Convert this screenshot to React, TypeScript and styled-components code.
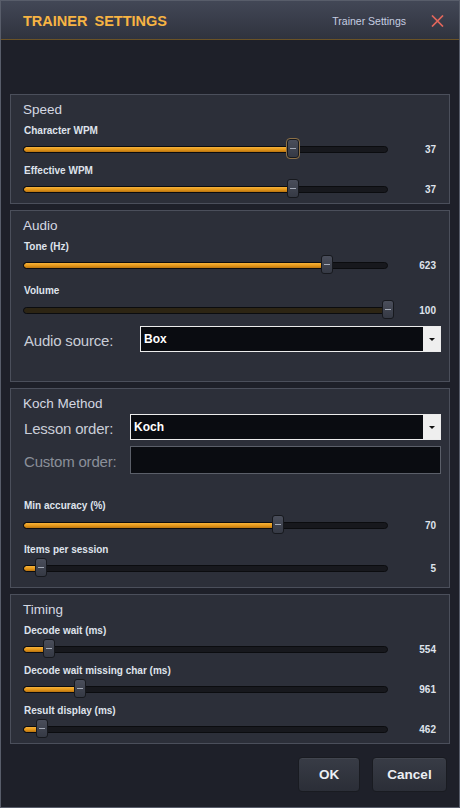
import React from "react";
import styled, { createGlobalStyle } from "styled-components";

const GlobalStyle = createGlobalStyle`
  html, body {
    margin: 0;
    padding: 0;
    background: #1e2029;
  }
  body {
    font-family: "Liberation Sans", Arial, sans-serif;
  }
  * {
    box-sizing: border-box;
  }
`;

const TRACK_W = 365;

const Window = styled.div`
  width: 460px;
  height: 808px;
  display: flex;
  flex-direction: column;
  background: #1e2029;
  border: 1px solid #585d6a;
  overflow: hidden;
`;

const TitleBar = styled.div`
  height: 39px;
  flex: none;
  display: flex;
  align-items: center;
  padding: 0 15px 0 22px;
  background: linear-gradient(#424756, #2f333e);
  border-bottom: 1px solid #6b5326;
`;

const Title = styled.div`
  flex: 1;
  color: #f7b443;
  font-size: 14.5px;
  font-weight: 700;
  word-spacing: 3px;
  padding-top: 1px;
`;

const Caption = styled.div`
  color: #c6cee2;
  font-size: 10.5px;
  margin-right: 25px;
  padding-top: 2px;
`;

const CloseIcon = styled.svg`
  width: 13px;
  height: 12px;
  margin-top: 1px;
`;

const Content = styled.div`
  flex: 1;
  display: flex;
  flex-direction: column;
  gap: 6px;
  padding: 54px 9px 0 9px;
`;

const Group = styled.section<{ $pb: number }>`
  display: flex;
  flex-direction: column;
  background: #2c2f39;
  border: 1px solid #4b4f5b;
  padding: 7px 8px ${(p) => p.$pb}px 12px;
`;

const GroupTitle = styled.div`
  color: #d4d8e2;
  font-size: 13.5px;
  line-height: 16px;
  height: 16px;
`;

const Field = styled.div<{ $mt?: number }>`
  display: flex;
  flex-direction: column;
  margin-top: ${(p) => p.$mt ?? 6}px;
`;

const FieldLabel = styled.div<{ $gap?: number }>`
  color: #dfe3ec;
  font-size: 10px;
  font-weight: 700;
  line-height: 14px;
  padding-left: 1px;
  margin-bottom: ${(p) => p.$gap ?? 1}px;
`;

const SliderRow = styled.div`
  display: grid;
  grid-template-columns: ${TRACK_W}px 1fr;
  align-items: center;
  height: 20px;
`;

const TrackArea = styled.div`
  position: relative;
  height: 20px;
  display: flex;
  align-items: center;
`;

const Track = styled.div`
  width: 100%;
  height: 7px;
  border-radius: 4px;
  background: #17181d;
  border: 1px solid #0b0c0f;
  overflow: hidden;
`;

const Fill = styled.div<{ $muted?: boolean }>`
  height: 100%;
  border-radius: 3px 0 0 3px;
  background: ${(p) =>
    p.$muted
      ? "#2d2514"
      : "linear-gradient(#f7b23a, #e29619 55%, #b87210)"};
`;

const Thumb = styled.div<{ $focus?: boolean }>`
  position: absolute;
  top: 0;
  width: 12px;
  height: 19px;
  border-radius: 3px;
  background: linear-gradient(#4a4e5b, #353944);
  border: 1px solid #17191e;
  outline: ${(p) => (p.$focus ? "1px solid #8c7046" : "none")};
  display: flex;
  align-items: center;
  justify-content: center;

  &::after {
    content: "";
    width: 6px;
    height: 1px;
    background: #a3a9b6;
  }
`;

const Value = styled.div`
  color: #dfe3ec;
  font-size: 10px;
  font-weight: 700;
  text-align: right;
  padding-right: 5px;
`;

const FormRow = styled.div<{ $label: number; $mt: number }>`
  display: grid;
  grid-template-columns: ${(p) => p.$label}px 1fr;
  align-items: center;
  margin-top: ${(p) => p.$mt}px;
`;

const FormLabel = styled.div<{ $disabled?: boolean }>`
  color: ${(p) => (p.$disabled ? "#8b8f99" : "#c9cdd7")};
  font-size: 15px;
  letter-spacing: -0.2px;
  padding: 3px 0 0 1px;
`;

const Combo = styled.div`
  height: 26px;
  display: flex;
  background: #0a0c11;
  border: 1px solid #ececec;
`;

const ComboText = styled.div`
  flex: 1;
  color: #ffffff;
  font-size: 12px;
  font-weight: 700;
  line-height: 24px;
  padding-left: 3px;
`;

const ComboButton = styled.div`
  width: 17px;
  background: #efefef;
  display: flex;
  align-items: center;
  justify-content: center;

  &::after {
    content: "";
    border-left: 3px solid transparent;
    border-right: 3px solid transparent;
    border-top: 3px solid #111;
  }
`;

const TextBox = styled.div`
  height: 28px;
  background: #0a0c11;
  border: 1px solid #5b5f69;
`;

const ButtonBar = styled.div`
  display: flex;
  justify-content: flex-end;
  gap: 12px;
  margin-top: 7px;
  padding-right: 3px;
`;

const Button = styled.button<{ $w: number }>`
  width: ${(p) => p.$w}px;
  height: 35px;
  border-radius: 4px;
  border: 1px solid #191b21;
  background: linear-gradient(#383c46, #2b2e37);
  box-shadow: inset 0 1px 0 rgba(255, 255, 255, 0.05);
  color: #eceff4;
  font-family: "Liberation Sans", Arial, sans-serif;
  font-size: 13.5px;
  font-weight: 700;
  padding: 0;
`;

type SliderProps = {
  label: string;
  value: string;
  pos: number;
  mt?: number;
  gap?: number;
  muted?: boolean;
  focus?: boolean;
};

const Slider = ({ label, value, pos, mt, gap, muted, focus }: SliderProps) => {
  const center = pos * TRACK_W;
  return (
    <Field $mt={mt}>
      <FieldLabel $gap={gap}>{label}</FieldLabel>
      <SliderRow>
        <TrackArea>
          <Track>
            <Fill $muted={muted} style={{ width: center }} />
          </Track>
          <Thumb $focus={focus} style={{ left: center - 6 }} />
        </TrackArea>
        <Value>{value}</Value>
      </SliderRow>
    </Field>
  );
};

const App: React.FC = () => {
  return (
    <>
      <GlobalStyle />
      <Window>
        <TitleBar>
          <Title>TRAINER SETTINGS</Title>
          <Caption>Trainer Settings</Caption>
          <CloseIcon viewBox="0 0 13 12">
            <path
              d="M1 0.5 L12 11.5 M12 0.5 L1 11.5"
              stroke="#e2675c"
              strokeWidth="1.7"
              fill="none"
            />
          </CloseIcon>
        </TitleBar>

        <Content>
          <Group $pb={4}>
            <GroupTitle>Speed</GroupTitle>
            <Slider label="Character WPM" value="37" pos={0.741} focus />
            <Slider label="Effective WPM" value="37" pos={0.741} mt={5} />
          </Group>

          <Group $pb={29}>
            <GroupTitle>Audio</GroupTitle>
            <Slider label="Tone (Hz)" value="623" pos={0.832} />
            <Slider label="Volume" value="100" pos={1} mt={9} gap={2} muted />
            <FormRow $label={117} $mt={6}>
              <FormLabel>Audio source:</FormLabel>
              <Combo>
                <ComboText>Box</ComboText>
                <ComboButton />
              </Combo>
            </FormRow>
          </Group>

          <Group $pb={9}>
            <GroupTitle>Koch Method</GroupTitle>
            <FormRow $label={107} $mt={2}>
              <FormLabel>Lesson order:</FormLabel>
              <Combo>
                <ComboText>Koch</ComboText>
                <ComboButton />
              </Combo>
            </FormRow>
            <FormRow $label={107} $mt={6}>
              <FormLabel $disabled>Custom order:</FormLabel>
              <TextBox />
            </FormRow>
            <Slider label="Min accuracy (%)" value="70" pos={0.699} mt={25} gap={2} />
            <Slider label="Items per session" value="5" pos={0.048} mt={8} />
          </Group>

          <Group $pb={4}>
            <GroupTitle>Timing</GroupTitle>
            <Slider label="Decode wait (ms)" value="554" pos={0.072} />
            <Slider label="Decode wait missing char (ms)" value="961" pos={0.156} mt={5} />
            <Slider label="Result display (ms)" value="462" pos={0.053} mt={5} />
          </Group>

          <ButtonBar>
            <Button $w={62}>OK</Button>
            <Button $w={75}>Cancel</Button>
          </ButtonBar>
        </Content>
      </Window>
    </>
  );
};

export default App;
